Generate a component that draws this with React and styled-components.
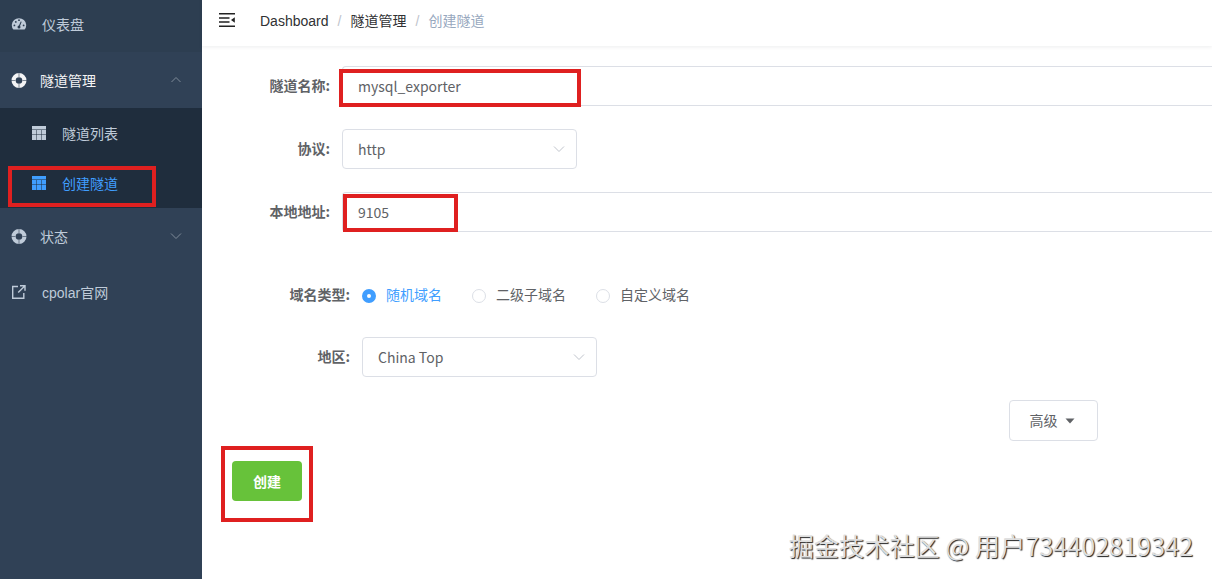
import React from 'react';
import styled, { createGlobalStyle } from 'styled-components';

const GlobalStyle = createGlobalStyle`
*, *::before {
  box-sizing: border-box;
}

body {
  margin: 0;
  overflow: hidden;
  background: #fff;
  color: #606266;
  font-family: "Liberation Sans", "Noto Sans CJK SC", sans-serif;
  font-size: 14px;
}
`;

const Layout = styled.div`
position: relative;
display: flex;
width: 100%;
height: 579px;
overflow: hidden;
`;

const Sidebar = styled.nav`
flex: 0 0 202px;
background: #304156;
color: #bfcbd9;
`;

const MenuItem = styled.div`
display: flex;
align-items: center;
height: ${({ height }) => height || 56}px;
padding: 0 20px ${({ lift }) => lift || 0}px 11px;
background: ${({ hovered }) => (hovered ? '#2d3e51' : 'transparent')};
color: ${({ active }) => (active ? '#f4f4f5' : 'inherit')};

> span {
  flex: 1;
  margin-left: ${({ gap }) => gap || 13}px;
}
`;

const SubMenu = styled.div`
height: 100px;
background: #1f2d3d;
`;

const SubItem = styled.div`
display: flex;
align-items: center;
gap: 15px;
height: 50px;
padding-left: 32px;
color: ${({ active }) => (active ? '#409eff' : '#bfcbd9')};
`;

const Main = styled.main`
flex: 1;
min-width: 0;
`;

const Navbar = styled.header`
display: flex;
align-items: flex-start;
height: 46px;
padding: 10px 0 0 16px;
box-shadow: 0 1px 4px rgba(0, 21, 41, 0.08);
`;

const Breadcrumb = styled.div`
display: flex;
margin-left: 24px;
line-height: 22px;
color: #303133;
`;

const Crumb = styled.span`
color: ${({ last }) => (last ? '#97a8be' : '#303133')};
`;

const Separator = styled.span`
width: 22px;
text-align: center;
color: #c0c4cc;
`;

const Form = styled.form`
padding-top: 20px;
font-family: "Noto Sans CJK SC", sans-serif;
`;

const Field = styled.div`
display: flex;
align-items: center;
height: 40px;
margin-bottom: ${({ space }) => space}px;
padding-left: ${({ inner }) => (inner ? 20 : 0)}px;
`;

const Label = styled.label`
flex: 0 0 128px;
margin-right: 12px;
text-align: right;
font-weight: 700;
line-height: 38px;
padding-bottom: 2px;
`;

const Input = styled.div`
flex: 1;
height: 40px;
padding-left: 15px;
border: 1px solid #dcdfe6;
border-right: 0;
border-radius: 4px 0 0 4px;
line-height: 38px;
`;

const Select = styled.div`
display: flex;
align-items: center;
justify-content: space-between;
width: 235px;
height: 40px;
padding: 0 11px 0 15px;
border: 1px solid #dcdfe6;
border-radius: 4px;
`;

const Radio = styled.span`
display: flex;
align-items: center;
gap: 10px;
margin-right: 30px;
padding-bottom: 3px;
color: ${({ checked }) => (checked ? '#409eff' : '#606266')};

&::before {
  content: '';
  width: 14px;
  height: 14px;
  margin-top: 5px;
  border: ${({ checked }) => (checked ? '5px solid #409eff' : '1px solid #dcdfe6')};
  border-radius: 50%;
}
`;

const AdvancedButton = styled.button`
display: flex;
align-items: center;
justify-content: center;
gap: 7px;
width: 89px;
height: 41px;
margin-left: 807px;
padding: 0 9px 1px 6px;
border: 1px solid #dcdfe6;
border-radius: 4px;
background: #fff;
color: #606266;
font: inherit;

svg {
  margin-top: 2px;
}
`;

const CreateButton = styled.button`
display: block;
width: 70px;
height: 40px;
margin: 20px 0 0 30px;
padding: 0 0 1px;
border: 0;
border-radius: 4px;
background: #67c23a;
color: #fff;
font: inherit;
font-weight: 700;
`;

const Mark = styled.div`
position: absolute;
left: ${({ x }) => x}px;
top: ${({ y }) => y}px;
width: ${({ w }) => w}px;
height: ${({ h }) => h}px;
border: 4px solid #df2020;
`;

const Watermark = styled.div`
position: absolute;
right: 19px;
bottom: 16px;
font-family: "Noto Sans CJK SC", sans-serif;
font-size: 25.2px;
line-height: 36px;
white-space: nowrap;
color: #dedede;
text-shadow: 1px 1px 1px #222;
`;

const GaugeIcon = () => (
  <svg width="16" height="14" viewBox="0 0 16 14">
    <path d="M2.4 12.6A7.2 7 0 1 1 13.6 12.6Z" fill="currentColor" />
    <g fill="#2d3e51">
      <circle cx="3.4" cy="8.4" r="0.9" />
      <circle cx="4.8" cy="4.9" r="0.9" />
      <circle cx="8" cy="3.2" r="0.9" />
      <circle cx="12.6" cy="8.4" r="0.9" />
      <circle cx="8" cy="10" r="1.5" />
    </g>
    <path d="M8 10L10.2 4.6" stroke="#2d3e51" strokeWidth="1.1" />
  </svg>
);

const RingIcon = () => (
  <svg width="16" height="16" viewBox="0 0 16 16">
    <circle cx="8" cy="8.5" r="5.4" fill="none" stroke="currentColor" strokeWidth="4.2" />
    <path d="M8 1v4M8 12v4M0 8.5h4.5M11.5 8.5h4.5" stroke="#304156" strokeWidth="0.6" />
  </svg>
);

const TableIcon = () => (
  <svg width="15" height="14" viewBox="0 0 15 14">
    <path d="M0 0h14v14H0z" fill="currentColor" />
    <path d="M0 3.5h14M0 8.5h14M4.5 4v10M9.5 4v10" stroke="#1f2d3d" strokeWidth="0.5" />
  </svg>
);

const LinkIcon = () => (
  <svg width="16" height="16" viewBox="0 0 16 16" fill="none" stroke="currentColor" strokeWidth="1.4">
    <path d="M7 2.5H1.7v11.8h11.1V9M9 1.7h5v5M14 1.7L7.2 8.5" />
  </svg>
);

const FoldIcon = () => (
  <svg width="18" height="20" viewBox="0 0 18 20">
    <path d="M1 3.8h16M1 8h10.5M1 12h10.5M1 16.2h16" stroke="#222" strokeWidth="1.6" />
    <path d="M13 10l3.8-2.8v5.6z" fill="#222" />
  </svg>
);

const Arrow = ({ up, color = '#c0c4cc' }) => (
  <svg width="12" height="8" viewBox="0 0 12 8" fill="none" stroke={color}>
    <path d={up ? 'M1.5 6L6 1.5l4.5 4.5' : 'M1 1.5L6 6.5l5-5'} />
  </svg>
);

const Caret = () => (
  <svg width="10" height="6" viewBox="0 0 10 6">
    <path d="M0.5 0.5h9L5 5.5z" fill="#606266" />
  </svg>
);

const App = () => {
  return (
    <>
      <GlobalStyle />
      <Layout>
        <Sidebar>
          <MenuItem height={52} gap={15} lift={4} hovered>
            <GaugeIcon />
            <span>仪表盘</span>
          </MenuItem>
          <MenuItem active>
            <RingIcon />
            <span>隧道管理</span>
            <Arrow up color="#7f8b99" />
          </MenuItem>
          <SubMenu>
            <SubItem>
              <TableIcon />
              隧道列表
            </SubItem>
            <SubItem active>
              <TableIcon />
              创建隧道
            </SubItem>
          </SubMenu>
          <MenuItem>
            <RingIcon />
            <span>状态</span>
            <Arrow color="#7f8b99" />
          </MenuItem>
          <MenuItem gap={15}>
            <LinkIcon />
            <span>cpolar官网</span>
          </MenuItem>
        </Sidebar>
        <Main>
          <Navbar>
            <FoldIcon />
            <Breadcrumb>
              <Crumb>Dashboard</Crumb>
              <Separator>/</Separator>
              <Crumb>隧道管理</Crumb>
              <Separator>/</Separator>
              <Crumb last>创建隧道</Crumb>
            </Breadcrumb>
          </Navbar>
          <Form>
            <Field space={23}>
              <Label>隧道名称:</Label>
              <Input>mysql_exporter</Input>
            </Field>
            <Field space={23}>
              <Label>协议:</Label>
              <Select>
                http
                <Arrow />
              </Select>
            </Field>
            <Field space={43}>
              <Label>本地地址:</Label>
              <Input>9105</Input>
            </Field>
            <Field space={22} inner>
              <Label>域名类型:</Label>
              <Radio checked>随机域名</Radio>
              <Radio>二级子域名</Radio>
              <Radio>自定义域名</Radio>
            </Field>
            <Field space={23} inner>
              <Label>地区:</Label>
              <Select>
                China Top
                <Arrow />
              </Select>
            </Field>
            <AdvancedButton type="button">
              高级
              <Caret />
            </AdvancedButton>
            <CreateButton type="button">创建</CreateButton>
          </Form>
        </Main>
        <Mark x={8} y={166} w={148} h={41} />
        <Mark x={339} y={69} w={242} h={38} />
        <Mark x={343} y={194} w={115} h={38} />
        <Mark x={221} y={446} w={92} h={76} />
        <Watermark>掘金技术社区 @ 用户734402819342</Watermark>
      </Layout>
    </>
  );
};

export default App;
